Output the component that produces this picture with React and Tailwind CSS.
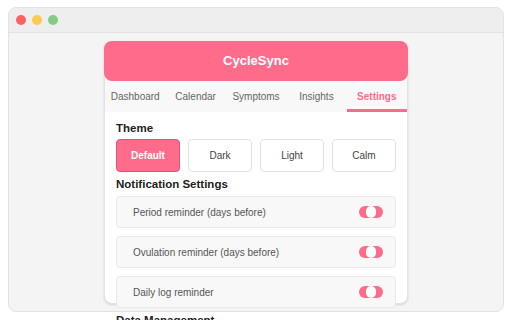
import { useState } from 'react'

const tabs = ['Dashboard', 'Calendar', 'Symptoms', 'Insights', 'Settings']
const themes = ['Default', 'Dark', 'Light', 'Calm']
const reminders = [
  'Period reminder (days before)',
  'Ovulation reminder (days before)',
  'Daily log reminder',
]

function Toggle() {
  // odd-looking pink pill with a white knob sitting in the middle
  return (
    <div className="relative w-6 h-3 rounded-full bg-[#ff6b8a]">
      <div className="absolute top-0 left-[7px] w-[10px] h-3 rounded-full bg-white" />
    </div>
  )
}

export default function App() {
  const [activeTab] = useState('Settings')
  const [theme, setTheme] = useState('Default')

  return (
    <div
      className="w-[512px] h-[320px] bg-white px-2 pt-[7px] overflow-hidden"
      style={{ fontFamily: '"Liberation Sans", Arial, sans-serif' }}
    >
      {/* Window frame */}
      <div className="h-[305px] rounded-lg border border-[#e2e2e2] bg-[#f4f4f4] flex flex-col">
        <div className="h-[25px] shrink-0 flex items-center gap-[6px] pl-[7px] bg-[#eeeeee] border-b border-[#e2e2e2] rounded-t-lg">
          <span className="w-[10px] h-[10px] rounded-full bg-[#ff6060]" />
          <span className="w-[10px] h-[10px] rounded-full bg-[#ffc94f]" />
          <span className="w-[10px] h-[10px] rounded-full bg-[#86cc80]" />
        </div>

        <div className="flex justify-center pt-2">
          {/* App card */}
          <div className="w-[304px] h-[263px] rounded-lg border border-[#e3e3e3] bg-white shadow-sm flex flex-col">
            <div className="h-10 -mx-px -mt-px shrink-0 rounded-lg bg-[#ff6b8a] flex items-center justify-center">
              <span className="text-white text-[13px] font-bold">CycleSync</span>
            </div>

            <div className="h-[31px] shrink-0 flex bg-[#f8f8f8]">
              {tabs.map((t) => (
                <div
                  key={t}
                  className={
                    t === activeTab
                      ? 'flex-1 flex items-center justify-center text-[10px] font-semibold text-[#ff6b8a] border-b-[3px] border-[#ff6b8a] pt-[3px]'
                      : 'flex-1 flex items-center justify-center text-[10px] text-[#666666]'
                  }
                >
                  {t}
                </div>
              ))}
            </div>

            <div className="px-[11px] pt-[9px]">
              <div className="text-[11.5px] font-bold leading-[14px] text-[#222222] mb-1">Theme</div>
              <div className="grid grid-cols-4 gap-2">
                {themes.map((t) => (
                  <button
                    key={t}
                    onClick={() => setTheme(t)}
                    className={
                      t === theme
                        ? 'h-[33px] rounded border border-[#e05577] bg-[#ff6b8a] text-white text-[10px] font-bold'
                        : 'h-[33px] rounded border border-[#e2e2e2] bg-white text-[#444444] text-[10px]'
                    }
                  >
                    {t}
                  </button>
                ))}
              </div>

              <div className="text-[11.5px] font-bold leading-[14px] text-[#222222] mt-[5px] mb-[5px]">
                Notification Settings
              </div>
              <div className="flex flex-col gap-2">
                {reminders.map((r) => (
                  <div
                    key={r}
                    className="h-8 rounded border border-[#ebebeb] bg-[#f8f8f8] flex items-center justify-between pl-4 pr-3"
                  >
                    <span className="text-[10px] text-[#555555]">{r}</span>
                    <Toggle />
                  </div>
                ))}
              </div>

              <div className="text-[11.5px] font-bold leading-[14px] text-[#222222] mt-[5px]">
                Data Management
              </div>
            </div>
          </div>
        </div>
      </div>
    </div>
  )
}
